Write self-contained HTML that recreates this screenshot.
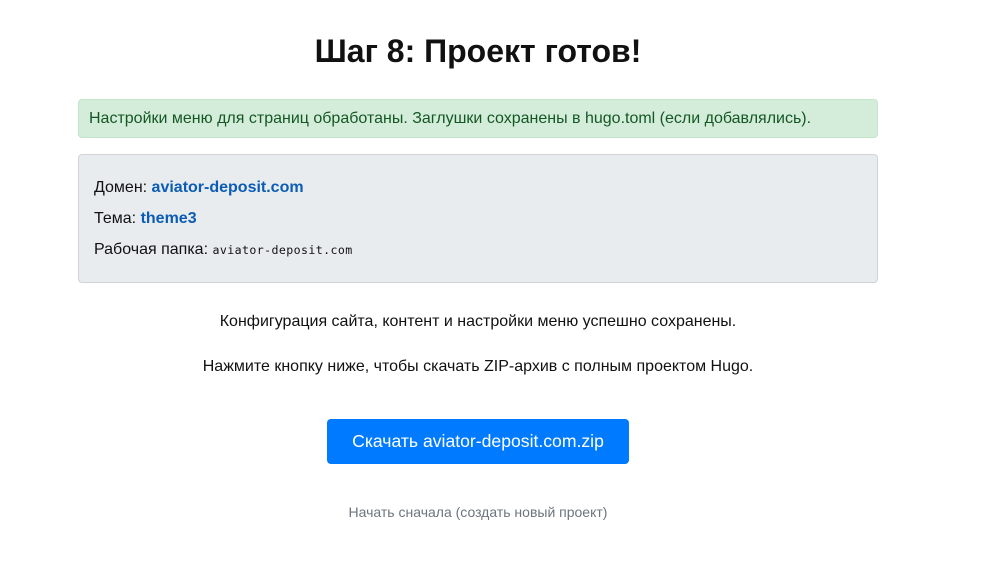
<!DOCTYPE html>
<html><head><meta charset="utf-8"><style>
body{margin:0;background:#fff;font-family:"Liberation Sans",sans-serif;color:#212529;width:986px;height:574px;overflow:hidden}
h1{position:absolute;top:31px;left:0;width:956px;text-align:center;margin:0;font-size:32px;font-weight:bold;color:#111;line-height:40px}
.alert{position:absolute;left:78px;top:99px;width:800px;height:39px;box-sizing:border-box;background:#d4edda;border:1px solid #c3e6cb;border-radius:4px;color:#155724;font-size:16px;line-height:37px;padding-left:10px}
.box{position:absolute;left:78px;top:154px;width:800px;height:129px;box-sizing:border-box;background:#e9ecef;border:1px solid #ced4da;border-radius:4px;font-size:16px;color:#111}
.box div{position:absolute;left:15px}
b{color:#0b5cb5}
code{font-family:"DejaVu Sans Mono",monospace;font-size:11.6px;letter-spacing:0.4px}
.t{position:absolute;left:0;width:956px;text-align:center;font-size:16px;color:#111}
.btn{position:absolute;left:327px;top:419px;width:302px;height:45px;background:#007bff;border-radius:4px;color:#fff;font-size:17.6px;line-height:45px;text-align:center}
</style></head><body>
<h1>Шаг 8: Проект готов!</h1>
<div class="alert">Настройки меню для страниц обработаны. Заглушки сохранены в hugo.toml (если добавлялись).</div>
<div class="box">
<div style="top:24px">Домен: <b>aviator-deposit.com</b></div>
<div style="top:55px">Тема: <b>theme3</b></div>
<div style="top:86px">Рабочая папка: <code>aviator-deposit.com</code></div>
</div>
<div class="t" style="top:313px">Конфигурация сайта, контент и настройки меню успешно сохранены.</div>
<div class="t" style="top:358px">Нажмите кнопку ниже, чтобы скачать ZIP-архив с полным проектом Hugo.</div>
<div class="btn">Скачать aviator-deposit.com.zip</div>
<div class="t" style="top:504px;font-size:14px;color:#6c757d">Начать сначала (создать новый проект)</div>
</body></html>
